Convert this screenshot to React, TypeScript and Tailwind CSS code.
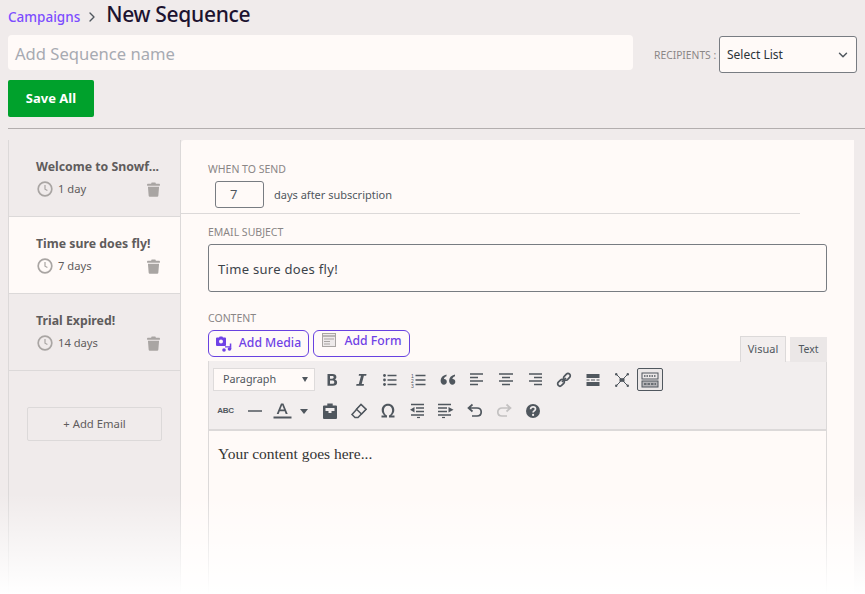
import type { ReactNode } from "react";
import { ChevronDown, ChevronRight } from "lucide-react";

const emails = [
  { title: "Welcome to Snowf...", delay: "1 day", active: false },
  { title: "Time sure does fly!", delay: "7 days", active: true },
  { title: "Trial Expired!", delay: "14 days", active: false },
];

function Clock() {
  return (
    <svg width="16" height="16" viewBox="0 0 16 16" fill="none" stroke="#a9a5a3">
      <circle cx="8" cy="8" r="6.8" strokeWidth="1.7" />
      <path d="M8 4v4.2l2.4 1.4" strokeWidth="1.2" />
    </svg>
  );
}

function Trash() {
  return (
    <svg width="13" height="15" viewBox="0 0 14 16" fill="#a9a5a3">
      <path d="M5 0.5h4l0.6 1.2H13.2a0.7 0.7 0 0 1 0.7 0.7V4H0.1V2.4a0.7 0.7 0 0 1 0.7-0.7H4.4z" />
      <path d="M1 5h12l-0.8 9.8a1.2 1.2 0 0 1-1.2 1.1H3a1.2 1.2 0 0 1-1.2-1.1z" />
    </svg>
  );
}

function Tool({ children, wide }: { children: ReactNode; wide?: boolean }) {
  return (
    <div className={`flex h-[22px] items-center justify-center ${wide ? "w-[46px]" : "w-[29px]"}`}>
      <svg width={wide ? 44 : 18} height="18" viewBox={wide ? "0 0 44 18" : "0 0 18 18"} fill="#50575e" stroke="none">
        {children}
      </svg>
    </div>
  );
}

const lines = (a: number[][]) => (
  <path d={a.map(([x, y, w]) => `M${x} ${y}h${w}`).join("")} stroke="#50575e" strokeWidth="1.5" fill="none" />
);

function Toolbar() {
  return (
    <div className="border-x border-b-[2px] border-[#dcd9d9] bg-[#f2eeee] pb-[7px] pt-[7px] pl-[4px]">
      <div className="flex items-center">
        <div className="mr-[2px] flex h-[23px] w-[102px] items-center justify-between border border-[#dedbdb] bg-[#fffaf8] pl-[9px] pr-[6px] text-[10.8px] text-[#50575e]">
          Paragraph
          <span className="h-0 w-0 border-x-[3.5px] border-t-[5px] border-x-transparent border-t-[#50575e]" />
        </div>
        <Tool>
          <path d="M4.500 3h5c2.500 0 3.900 1 3.900 3 0 1.200-.6 2.100-1.700 2.500 1.500.3 2.400 1.400 2.400 2.900 0 2.200-1.600 3.300-4.200 3.300H4.500zM7 5v2.700h2.100c1 0 1.600-.5 1.600-1.400S10.100 5 9 5zM7 9.600v3.200h2.400c1.200 0 1.900-.6 1.900-1.600s-.7-1.600-2-1.600z" />
        </Tool>
        <Tool>
          <path d="M7 3h7.500l-.3 1.700h-2.300L9.700 13h2.300l-.3 1.700H4.200l.3-1.700h2.300L9 4.700H6.700z" />
        </Tool>
        <Tool>
          <circle cx="3.500" cy="4.500" r="1.400" />
          <circle cx="3.500" cy="9" r="1.400" />
          <circle cx="3.500" cy="13.500" r="1.400" />
          {lines([[6.5, 4.5, 9], [6.5, 9, 9], [6.5, 13.5, 9]])}
        </Tool>
        <Tool>
          <text x="1" y="6.5" fontSize="5" fontFamily="Liberation Sans, sans-serif">1</text>
          <text x="1" y="11.5" fontSize="5" fontFamily="Liberation Sans, sans-serif">2</text>
          <text x="1" y="16.5" fontSize="5" fontFamily="Liberation Sans, sans-serif">3</text>
          {lines([[5.5, 4.5, 10], [5.5, 9, 10], [5.5, 13.5, 10]])}
        </Tool>
        <Tool>
          <path d="M7.500 3.500v1.800C5.800 6 5 7 4.900 8.100c1.700-.1 2.900 1 2.900 2.700 0 1.700-1.200 2.900-2.900 2.900C3 13.700 1.600 12.200 1.600 9.800c0-3 2-5.500 5.900-6.300zM16 3.500v1.800c-1.700.7-2.500 1.700-2.600 2.800 1.700-.1 2.900 1 2.900 2.700 0 1.700-1.200 2.900-2.900 2.900-1.900 0-3.300-1.500-3.300-3.900 0-3 2-5.500 5.900-6.300z" />
        </Tool>
        <Tool>{lines([[2, 3, 13], [2, 6.5, 8], [2, 10, 13], [2, 13.5, 8]])}</Tool>
        <Tool>{lines([[2, 3, 14], [5, 6.5, 8], [2, 10, 14], [5, 13.5, 8]])}</Tool>
        <Tool>{lines([[3, 3, 13], [8, 6.5, 8], [3, 10, 13], [8, 13.5, 8]])}</Tool>
        <Tool>
          <g fill="none" stroke="#50575e" strokeWidth="1.7">
            <rect x="-3.200" y="-2.300" width="7.600" height="4.600" rx="2.300" transform="translate(5.600 12.200) rotate(-45)" />
            <rect x="-4.200" y="-2.300" width="7.600" height="4.600" rx="2.300" transform="translate(12.200 5.600) rotate(-45)" />
            <path d="M7 11l4-4" />
          </g>
        </Tool>
        <Tool>
          <path d="M2.500 3h13v4h-13zM2.500 11h13v4h-13z" />
          <path d="M2.500 9h3M7 9h4M12.500 9h3" stroke="#50575e" strokeWidth="1.200" />
        </Tool>
        <Tool>
          <path d="M6.500 7.200h5v3.600h-5z" />
          <path d="M3.500 3.500l11 11M14.500 3.500l-11 11" stroke="#50575e" strokeWidth="1" />
          <circle cx="3.200" cy="3.200" r="1.200" />
          <circle cx="14.800" cy="3.200" r="1.200" />
          <circle cx="3.200" cy="14.800" r="1.200" />
          <circle cx="14.800" cy="14.800" r="1.200" />
        </Tool>
        <div className="ml-[1px] flex h-[23px] w-[26px] items-center justify-center rounded-[2px] border border-[#50575e] bg-[#ebe7e7]">
          <svg width="18" height="16" viewBox="0 0 18 16" fill="none" stroke="#50575e">
            <rect x="1" y="1" width="16" height="6" strokeWidth="1" />
            <rect x="1" y="9" width="16" height="6" fill="#50575e" fillOpacity="0.35" strokeWidth="1" />
            <path d="M3 4h12" strokeWidth="1.500" strokeDasharray="1.500 1" />
            <path d="M3 12h12" strokeWidth="1.500" strokeDasharray="2.500 1" />
          </svg>
        </div>
      </div>
      <div className="-ml-[2px] mt-[9px] flex items-center">
        <div className="flex h-[22px] w-[29px] items-center justify-center text-[8px] font-bold tracking-[-0.3px] text-[#50575e] [font-family:'Liberation_Sans',sans-serif]">
          ABC
        </div>
        <Tool>{lines([[2, 9, 14]])}</Tool>
        <Tool wide>
          <g transform="translate(3 0)">
            <path d="M8 1.500h2.400l4.300 10.500h-2l-1-2.700H6.700l-1 2.700h-2zM7.400 7.600h3.600L9.200 3z" />
            <path d="M0.500 14.500h18v2h-18z" />
          </g>
          <path d="M30 7h8l-4 5z" />
        </Tool>
        <Tool>
          <path d="M6.300 1.500h5.400v2H15a1 1 0 0 1 1 1V16a1 1 0 0 1-1 1H3a1 1 0 0 1-1-1V4.500a1 1 0 0 1 1-1h3.300z" />
          <path d="M4.500 6h9v3h-3v2h-3V9h-3z" fill="#f2eeee" />
        </Tool>
        <Tool>
          <path d="M11 2.500l5 4.800-8 8.200H5L2 12.500z" fill="none" stroke="#50575e" strokeWidth="1.500" />
          <path d="M11 2.500l5 4.800-4.500 4.700-5-4.800z" fill="#f2eeee" stroke="#50575e" strokeWidth="1.500" />
        </Tool>
        <Tool>
          <path d="M2.500 15.500v-2h3.100C3.800 12.200 2.700 10.300 2.700 8c0-3.700 2.700-6.300 6.300-6.300s6.300 2.600 6.300 6.300c0 2.300-1.100 4.200-2.900 5.500h3.100v2H10v-2c1.900-.8 3.100-2.900 3.100-5.300 0-2.700-1.600-4.500-4.100-4.500S4.900 5.500 4.900 8.200c0 2.400 1.200 4.500 3.100 5.300v2z" />
        </Tool>
        <Tool>
          {lines([[3, 2.5, 13], [8, 6, 8], [8, 9.5, 8], [3, 13, 13]])}
          <path d="M6.500 5v5.500L2 7.800z" />
          <path d="M9 15.500h3" stroke="#50575e" strokeWidth="1.200" />
        </Tool>
        <Tool>
          {lines([[1, 2.5, 13], [1, 6, 9], [1, 9.5, 9], [1, 13, 13]])}
          <path d="M11.500 5v5.500L16.500 7.800z" />
          <path d="M5 15.500h3" stroke="#50575e" strokeWidth="1.200" />
        </Tool>
        <Tool>
          <path d="M6.500 2.500L2.500 6l4 3.500M3 6h8c2.500 0 4.200 1.700 4.200 4s-1.700 4-4.200 4H6" fill="none" stroke="#50575e" strokeWidth="1.700" />
        </Tool>
        <Tool>
          <path d="M11.500 2.500l4 3.500-4 3.500M15 6H7c-2.500 0-4.200 1.700-4.200 4S4.500 14 7 14h5" fill="none" stroke="#c3c1c1" strokeWidth="1.700" />
        </Tool>
        <Tool>
          <circle cx="9" cy="9" r="7" />
          <path d="M6.600 7.200c0-1.500 1.100-2.300 2.500-2.300s2.400.8 2.400 2.100c0 1.900-2.400 1.800-2.400 3.500" fill="none" stroke="#f2eeee" strokeWidth="1.700" />
          <circle cx="9.100" cy="12.900" r="1.100" fill="#f2eeee" />
        </Tool>
      </div>
    </div>
  );
}

export default function App() {
  return (
    <div className="relative h-[594px] w-[865px] overflow-hidden bg-[#f0ebeb] text-[#50575e] [font-family:'Noto_Sans',sans-serif]">
      {/* HEADER */}
      <div className="flex h-[30px] items-center pl-[8px]">
        <span className="mt-[4px] text-[13.5px] font-medium text-[#7c4dff]">Campaigns</span>
        <ChevronRight className="ml-[4px] mt-[4px] h-[16px] w-[16px] text-[#50575e]" />
        <h1 className="-mt-[1px] ml-[6px] text-[21px] font-medium tracking-[-0.3px] text-[#1d1330]">New Sequence</h1>
      </div>
      <div className="mt-[5px] flex items-start pl-[8px]">
        <div className="flex h-[35px] w-[625px] items-center rounded-[4px] bg-[#fffaf8] pl-[7px] pt-[3px] text-[16.6px] text-[#a7aab2]">
          Add Sequence name
        </div>
        <span className="ml-[21px] mt-[13px] w-[62px] whitespace-nowrap text-[10.3px] text-[#8a8686]">RECIPIENTS :</span>
        <div className="ml-[3px] mt-[1px] flex h-[37px] w-[138px] items-center justify-between rounded-[3px] border border-[#787c82] bg-[#fffaf8] pl-[7px] pr-[6px] pt-[1px] text-[12px] text-[#2c3338]">
          Select List
          <ChevronDown className="h-[14px] w-[14px] text-[#50575e]" strokeWidth={2.5} />
        </div>
      </div>
      <div className="mt-[7px] pl-[8px]">
        <div className="flex h-[37px] w-[86px] items-center justify-center rounded-[2px] bg-[#00a12c] text-[13px] font-bold text-white">
          Save All
        </div>
      </div>
      <div className="ml-[8px] mt-[11px] border-t border-[#b3aeae]" />

      {/* BODY */}
      <div className="mt-[11px] flex pl-[8px]">
        <aside className="h-[460px] w-[173px] shrink-0 border-x border-[#dcd9d9]">
          {emails.map((e) => (
            <div
              key={e.title}
              className={`h-[77px] border-b border-[#dcd9d9] pl-[27px] pr-[20px] pt-[18px] ${e.active ? "bg-[#fffaf8]" : ""}`}
            >
              <div className="whitespace-nowrap text-[12.3px] font-bold leading-[18px] text-[#5f5c5c]">{e.title}</div>
              <div className="mt-[5px] flex items-center justify-between">
                <div className="flex items-center gap-[5px] pl-[1px] text-[11.2px] text-[#5f5c5c]">
                  <Clock />
                  {e.delay}
                </div>
                <Trash />
              </div>
            </div>
          ))}
          <div className="ml-[18px] mt-[36px] flex h-[34px] w-[135px] items-center justify-center rounded-[2px] border border-[#dcd9d9] text-[11.3px] text-[#5f5c5c]">
            + Add Email
          </div>
        </aside>

        <main className="h-[460px] w-[673px] shrink-0 rounded-tl-[4px] bg-[#fffaf8]">
          <div className="w-[619px] border-b border-[#dcd9d9] pb-[5px] pl-[27px] pt-[22px]">
            <div className="text-[10.5px] leading-[15px] text-[#8a8686]">WHEN TO SEND</div>
            <div className="mt-[4px] flex items-center pl-[7px]">
              <div className="flex h-[27px] w-[49px] items-center rounded-[3px] border border-[#787c82] pl-[14px] text-[13px] text-[#50575e]">
                7
              </div>
              <span className="ml-[10px] pt-[1px] text-[11px] text-[#50575e]">days after subscription</span>
            </div>
          </div>
          <div className="pl-[27px] pr-[27px] pt-[10px]">
            <div className="pt-[1px] text-[10.5px] leading-[14px] text-[#8a8686]">EMAIL SUBJECT</div>
            <div className="mt-[5px] flex h-[48px] w-[619px] items-center rounded-[3px] border border-[#787c82] pl-[9px] pt-[3px] text-[13px] tracking-[0.3px] text-[#3c434a]">
              Time sure does fly!
            </div>
            <div className="mt-[19px] text-[10.5px] leading-[15px] text-[#8a8686]">CONTENT</div>
            <div className="mt-[4px] flex h-[31px] w-[619px] items-start">
              <div className="flex h-[27px] w-[101px] items-center justify-center gap-[7px] rounded-[6px] border border-[#6842e0] text-[12.2px] font-medium text-[#6f42e6]">
                <svg width="16" height="16" viewBox="0 0 16 16" fill="#6f42e6">
                  <path d="M1 1.500h2l.7-1h2.600l.7 1h2a1 1 0 0 1 1 1V9a1 1 0 0 1-1 1H1a1 1 0 0 1-1-1V2.500a1 1 0 0 1 1-1z" />
                  <circle cx="5" cy="5.500" r="2" fill="#fffaf8" />
                  <circle cx="8" cy="14" r="1.800" />
                  <circle cx="13.500" cy="13" r="1.800" />
                  <path d="M9 14V11.500h5.300V13h1V7.500h-1.500v2.700H9" />
                </svg>
                Add Media
              </div>
              <div className="ml-[4px] flex h-[27px] w-[97px] items-start justify-center gap-[9px] rounded-[6px] border border-[#6842e0] pt-[1px] text-[12.2px] font-medium text-[#6f42e6]">
                <svg width="14" height="14" viewBox="0 0 14 14" fill="none" stroke="#a9a5a3" className="mt-[1px]">
                  <rect x="0.500" y="0.500" width="13" height="13" fill="#eeeaea" />
                  <path d="M0.500 3h13" strokeWidth="1.500" />
                  <path d="M2 6h10M2 8.500h6M2 11h6" strokeWidth="1" />
                </svg>
                Add Form
              </div>
              <div className="ml-auto mt-[6px] flex items-end gap-[4px]">
                <div className="relative z-10 flex h-[26px] w-[46px] items-center justify-center border-x border-t border-[#dcd9d9] bg-[#f2eeee] text-[11px] text-[#50575e]">
                  Visual
                </div>
                <div className="flex h-[25px] w-[37px] items-center justify-center bg-[#ebe7e7] text-[10.5px] text-[#50575e]">Text</div>
              </div>
            </div>
            <div className="w-[619px]">
              <Toolbar />
              <div className="h-[170px] border-x border-[#dcd9d9] pl-[9px] pt-[14px] text-[15.5px] leading-[18px] text-[#333] [font-family:'Liberation_Serif',serif]">
                Your content goes here...
              </div>
            </div>
          </div>
        </main>
      </div>

      {/* bottom fade over page */}
      <div className="pointer-events-none absolute inset-x-0 bottom-0 h-[100px] bg-gradient-to-b from-transparent to-white" />
    </div>
  );
}
